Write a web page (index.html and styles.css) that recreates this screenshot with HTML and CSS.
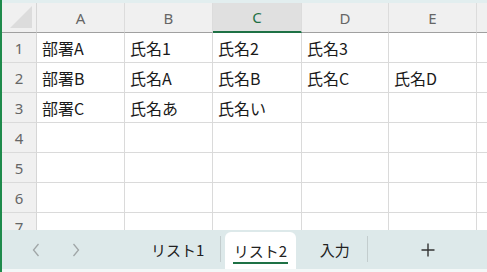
FILE: index.html
```html
<!DOCTYPE html>
<html lang="ja">
<head>
<meta charset="utf-8">
<link rel="stylesheet" href="styles.css">
</head>
<body>
<div class="app">
  <div class="topstrip"></div>
  <div class="sheet">
    <div class="corner"><div class="tri"></div></div>
    <div class="ch">A</div>
    <div class="ch">B</div>
    <div class="ch sel">C</div>
    <div class="ch">D</div>
    <div class="ch">E</div>
    <div class="ch last"></div>

    <div class="rh">1</div>
    <div class="c">部署A</div><div class="c">氏名1</div><div class="c">氏名2</div><div class="c">氏名3</div><div class="c"></div><div class="c last"></div>
    <div class="rh">2</div>
    <div class="c">部署B</div><div class="c">氏名A</div><div class="c">氏名B</div><div class="c">氏名C</div><div class="c">氏名D</div><div class="c last"></div>
    <div class="rh">3</div>
    <div class="c">部署C</div><div class="c">氏名あ</div><div class="c">氏名い</div><div class="c"></div><div class="c"></div><div class="c last"></div>
    <div class="rh">4</div>
    <div class="c"></div><div class="c"></div><div class="c"></div><div class="c"></div><div class="c"></div><div class="c last"></div>
    <div class="rh">5</div>
    <div class="c"></div><div class="c"></div><div class="c"></div><div class="c"></div><div class="c"></div><div class="c last"></div>
    <div class="rh">6</div>
    <div class="c"></div><div class="c"></div><div class="c"></div><div class="c"></div><div class="c"></div><div class="c last"></div>
    <div class="rh r7">7</div>
    <div class="c"></div><div class="c"></div><div class="c"></div><div class="c"></div><div class="c"></div><div class="c last"></div>
  </div>
  <div class="tabs">
    <div class="nav">
      <svg class="arrow" width="10" height="16" viewBox="0 0 10 16"><path d="M7.5 2 L2.5 8 L7.5 14" fill="none" stroke="#a0a6a7" stroke-width="1.3"/></svg>
      <svg class="arrow" width="10" height="16" viewBox="0 0 10 16"><path d="M2.5 2 L7.5 8 L2.5 14" fill="none" stroke="#a0a6a7" stroke-width="1.3"/></svg>
    </div>
    <div class="tab t1">リスト1</div>
    <div class="sep"></div>
    <div class="tab active"><span class="lbl">リスト2</span></div>
    <div class="tab t3">入力</div>
    <div class="sep"></div>
    <div class="plus">
      <svg width="16" height="16" viewBox="0 0 16 16"><path d="M8 1.5 V14.5 M1.5 8 H14.5" stroke="#333" stroke-width="1.4" fill="none"/></svg>
    </div>
  </div>
  <div class="bottomstrip"></div>
</div>
</body>
</html>
```

FILE: styles.css
```css
html, body {
  margin: 0;
  padding: 0;
  background: #ffffff;
}
.app {
  width: 487px;
  height: 272px;
  overflow: hidden;
  border-left: 2px solid #1f8b4c;
  box-sizing: border-box;
  display: flex;
  flex-direction: column;
  font-family: "Noto Sans CJK JP", "Noto Sans", sans-serif;
}
.topstrip {
  height: 3px;
  background: #e2eeef;
  flex: none;
}
.sheet {
  flex: none;
  height: 227px;
  overflow: hidden;
  display: grid;
  grid-template-columns: 35px 88px 88px 89px 87px 88px 1fr;
  grid-template-rows: 30px repeat(7, 30px);
}
.corner {
  background: #f0f0f0;
  border-right: 1px solid #d6d6d6;
  border-bottom: 1px solid #a0a0a0;
  position: relative;
}
.tri {
  position: absolute;
  right: 4px;
  bottom: 4px;
  width: 0;
  height: 0;
  border-left: 22px solid transparent;
  border-bottom: 22px solid #dcdcdc;
}
.ch {
  background: #f0f0f0;
  border-right: 1px solid #dcdcdc;
  border-bottom: 1px solid #a0a0a0;
  display: flex;
  align-items: center;
  justify-content: center;
  color: #666666;
  font-family: "Noto Sans", sans-serif;
  font-size: 15px;
}
.ch.sel {
  background: #e0e0e0;
  color: #1e7145;
  border-bottom: 2px solid #1e7145;
}
.ch.last {
  border-right: none;
}
.rh {
  background: #f0f0f0;
  border-right: 1px solid #d6d6d6;
  border-bottom: 1px solid #dadada;
  display: flex;
  align-items: center;
  justify-content: center;
  color: #666666;
  font-family: "Noto Sans", sans-serif;
  font-size: 15px;
}
.rh.r7 {
  align-items: flex-start;
  padding-top: 4px;
}
.c {
  border-right: 1px solid #dadada;
  border-bottom: 1px solid #dadada;
  display: flex;
  align-items: center;
  padding-left: 5px;
  font-size: 16px;
  color: #1a1a1a;
  white-space: nowrap;
}
.c.last {
  border-right: none;
}
.tabs {
  flex: none;
  height: 39px;
  background: #dde9ea;
  display: flex;
  align-items: stretch;
  font-size: 15px;
  color: #222;
}
.nav {
  width: 120px;
  display: flex;
  align-items: center;
  padding-left: 29px;
  gap: 30px;
  box-sizing: border-box;
}
.arrow {
  display: block;
}
.tab {
  display: flex;
  align-items: center;
  justify-content: center;
}
.t1 {
  width: 98px;
  padding-left: 14px;
  box-sizing: border-box;
}
.sep {
  width: 1px;
  background: #c3cdce;
  margin: 6px 0 7px;
}
.active {
  width: 72px;
  margin-left: 4px;
  margin-top: 2px;
  background: #ffffff;
  border-radius: 6px 6px 0 0;
  box-sizing: border-box;
}
.active .lbl {
  border-bottom: 2px solid #1e7145;
  line-height: 22px;
  padding: 0 1px;
  margin-top: 2px;
}
.t3 {
  width: 71px;
  padding-left: 6px;
  box-sizing: border-box;
}
.plus {
  width: 119px;
  display: flex;
  align-items: center;
  justify-content: center;
}
.bottomstrip {
  flex: 1;
  background: #f3f7f7;
}
```
